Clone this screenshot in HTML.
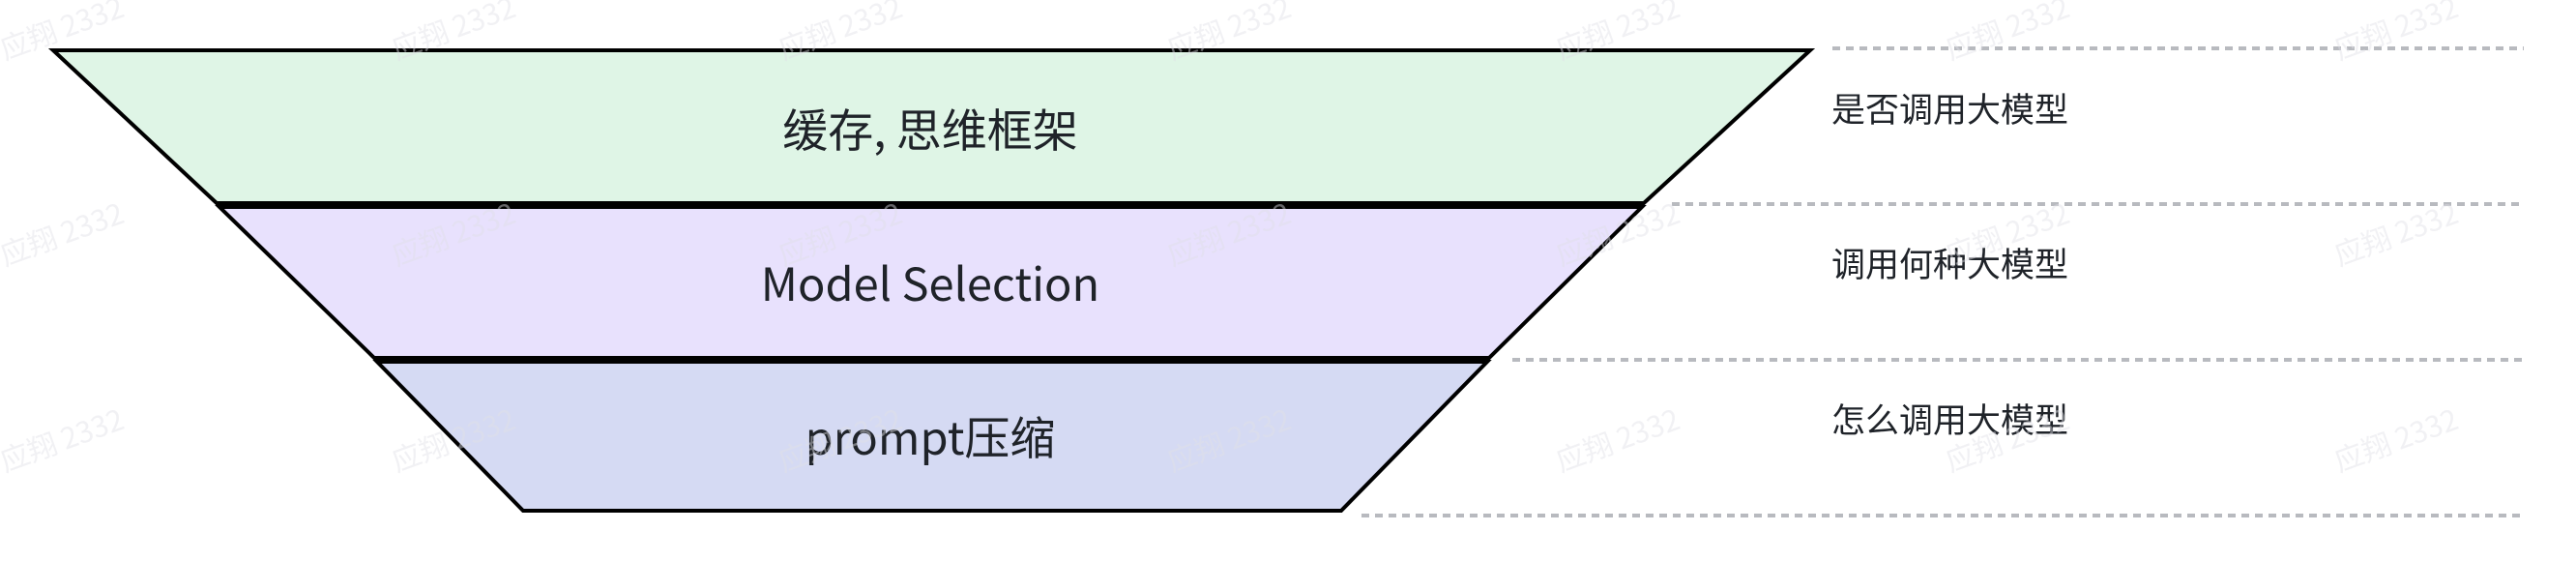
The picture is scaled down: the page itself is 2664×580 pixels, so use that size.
<!DOCTYPE html>
<html><head><meta charset="utf-8"><style>
html,body{margin:0;padding:0;background:#fff;}
svg{display:block;}
</style></head><body>
<svg width="2664" height="580" viewBox="0 0 2664 580" xmlns="http://www.w3.org/2000/svg" font-family="'Noto Sans CJK SC','Liberation Sans',sans-serif">
<polygon points="55,52 1872,52 1700,210 224,210" fill="#dff5e6" stroke="#000" stroke-width="4" stroke-linejoin="miter"/>
<polygon points="227,214 1698,214 1540,370 387,370" fill="#e8e1fd" stroke="#000" stroke-width="4"/>
<polygon points="390,374 1538,374 1387,528 541,528" fill="#d5daf3" stroke="#000" stroke-width="4"/>
<g stroke="#b8babf" stroke-width="4" stroke-dasharray="8,6">
<line x1="1895" y1="50" x2="2610" y2="50"/>
<line x1="1729" y1="211" x2="2610" y2="211"/>
<line x1="1564" y1="372" x2="2610" y2="372"/>
<line x1="1408" y1="533" x2="2610" y2="533"/>
</g>
<g fill="#1f2329" font-size="47" text-anchor="middle">
<text x="962" y="152">缓存, 思维框架</text>
<text x="962" y="311">Model Selection</text>
<text x="962" y="470">prompt压缩</text>
</g>
<g fill="#1f2329" font-size="35">
<text x="1894" y="126">是否调用大模型</text>
<text x="1894" y="286">调用何种大模型</text>
<text x="1894" y="447">怎么调用大模型</text>
</g>
<g fill="#dfe1e6" fill-opacity="0.45" font-size="30">
<text transform="translate(5,62) rotate(-20)">应翔 2332</text>
<text transform="translate(410,62) rotate(-20)">应翔 2332</text>
<text transform="translate(810,62) rotate(-20)">应翔 2332</text>
<text transform="translate(1212,62) rotate(-20)">应翔 2332</text>
<text transform="translate(1614,62) rotate(-20)">应翔 2332</text>
<text transform="translate(2017,62) rotate(-20)">应翔 2332</text>
<text transform="translate(2419,62) rotate(-20)">应翔 2332</text>
<text transform="translate(5,275) rotate(-20)">应翔 2332</text>
<text transform="translate(410,275) rotate(-20)">应翔 2332</text>
<text transform="translate(810,275) rotate(-20)">应翔 2332</text>
<text transform="translate(1212,275) rotate(-20)">应翔 2332</text>
<text transform="translate(1614,275) rotate(-20)">应翔 2332</text>
<text transform="translate(2017,275) rotate(-20)">应翔 2332</text>
<text transform="translate(2419,275) rotate(-20)">应翔 2332</text>
<text transform="translate(5,488) rotate(-20)">应翔 2332</text>
<text transform="translate(410,488) rotate(-20)">应翔 2332</text>
<text transform="translate(810,488) rotate(-20)">应翔 2332</text>
<text transform="translate(1212,488) rotate(-20)">应翔 2332</text>
<text transform="translate(1614,488) rotate(-20)">应翔 2332</text>
<text transform="translate(2017,488) rotate(-20)">应翔 2332</text>
<text transform="translate(2419,488) rotate(-20)">应翔 2332</text>
</g>
</svg>
</body></html>
